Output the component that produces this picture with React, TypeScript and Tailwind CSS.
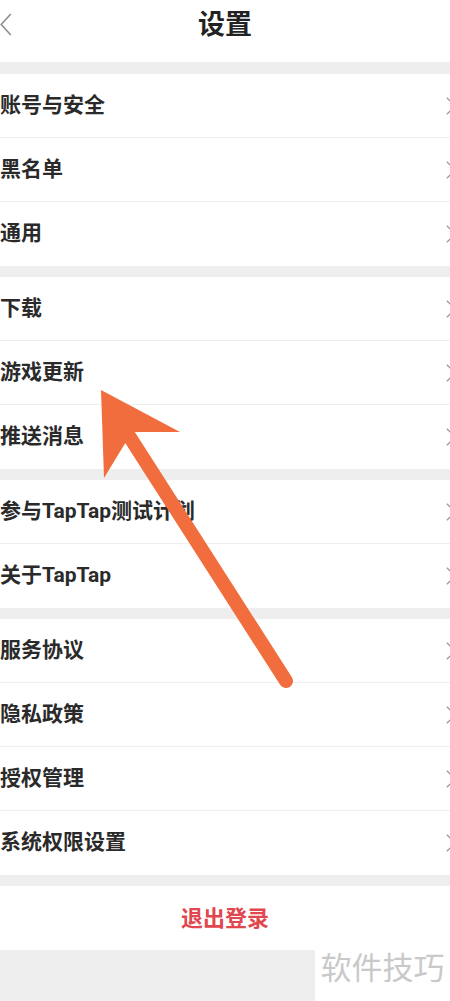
const GROUPS: string[][] = [
  ["账号与安全", "黑名单", "通用"],
  ["下载", "游戏更新", "推送消息"],
  ["参与TapTap测试计划", "关于TapTap"],
  ["服务协议", "隐私政策", "授权管理", "系统权限设置"],
];

const FONT = { fontFamily: "Roboto, 'Noto Sans CJK SC', sans-serif" };

const Chevron = () => (
  <svg viewBox="0 0 14 24" className="-mr-[7px] h-[20px] w-[12px]" fill="none" stroke="#9a9a9a" strokeWidth="1.6">
    <path d="M2 2 L12 12 L2 22" />
  </svg>
);

function Row({ label }: { label: string }) {
  return (
    <div className="flex h-[64px] items-center justify-between border-b border-[#eeeeee] last:border-b-0">
      <span className="text-[21px] font-bold text-[#2a2a2a]">{label}</span>
      <Chevron />
    </div>
  );
}

export default function App() {
  return (
    <div className="relative h-[1001px] w-[450px] overflow-hidden bg-white" style={FONT}>
      {/* header */}
      <div className="relative flex h-[62px] items-center justify-center pb-[12px]">
        <svg viewBox="0 0 12 24" className="absolute left-0 top-[13px] h-[23px] w-[12px]" fill="none" stroke="#8a8a8a" strokeWidth="1.6">
          <path d="M11 1 L1 12 L11 23" />
        </svg>
        <h1 className="text-[27px] font-bold text-[#222]">设置</h1>
      </div>

      {GROUPS.map((g, i) => (
        <div key={i}>
          <div className={i === 0 ? "h-[12px] bg-[#eeeeee]" : "h-[11px] bg-[#eeeeee]"} />
          <div className="flex flex-col">
            {g.map((label) => (
              <Row key={label} label={label} />
            ))}
          </div>
        </div>
      ))}

      <div className="h-[11px] bg-[#eeeeee]" />
      <div className="flex h-[64px] items-center justify-center">
        <span className="text-[22px] font-bold text-[#e0474e]">退出登录</span>
      </div>

      <div className="flex h-[52px]">
        <div className="w-[315px] bg-[#eeeeee]" />
        <div className="flex flex-1 items-start justify-center">
          <span className="text-[31px] leading-[38px] text-[#c9c9c9]">软件技巧</span>
        </div>
      </div>

      {/* annotation arrow */}
      <svg className="pointer-events-none absolute left-0 top-0" width="450" height="1001" viewBox="0 0 450 1001">
        <line x1="286" y1="681" x2="122" y2="425" stroke="#f26d3d" strokeWidth="14" strokeLinecap="round" />
        <path d="M101 390 L180 432 L132 432 L104 478 Z" fill="#f26d3d" />
      </svg>
    </div>
  );
}
